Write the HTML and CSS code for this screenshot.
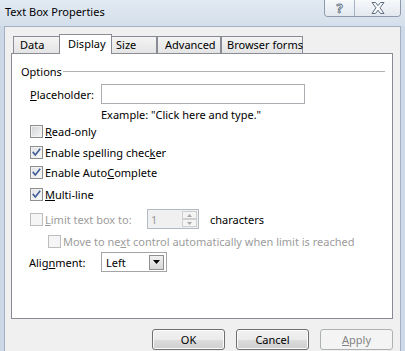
FILE: index.html
```html
<!DOCTYPE html>
<html>
<head>
<meta charset="utf-8">
<title>Text Box Properties</title>
<link rel="stylesheet" href="styles.css">
</head>
<body>
<div class="window">
  <div class="titlebar">
    <span class="title">Text Box Properties</span>
    <div class="caption-btns">
      <span class="cap-btn help">?</span>
      <span class="cap-btn close">
        <svg width="16" height="12" viewBox="0 0 16 12"><polygon points="2,0.5 5.5,0.5 8,3.6 10.5,0.5 14,0.5 10,5.8 14,11.5 10.5,11.5 8,8.2 5.5,11.5 2,11.5 6,5.8" fill="#fbfcfd" stroke="#5d6d80" stroke-width="1"/></svg>
      </span>
    </div>
  </div>
  <div class="client">
    <div class="tabs">
      <div class="tab tab-data">Data</div>
      <div class="tab active tab-display">Display</div>
      <div class="tab tab-size">Size</div>
      <div class="tab tab-adv">Advanced</div>
      <div class="tab tab-bf">Browser forms</div>
    </div>
    <div class="panel">
      <div class="group">
        <span>Options</span>
        <span class="rule"></span>
      </div>
      <div class="field-row">
        <span class="field-label"><u>P</u>laceholder:</span>
        <div class="textbox"></div>
      </div>
      <div class="example">Example: "Click here and type."</div>
      <div class="check-row r-readonly">
        <span class="check"></span>
        <span><u>R</u>ead-only</span>
      </div>
      <div class="check-row r-spell">
        <span class="check checked"><svg width="11" height="11" viewBox="0 0 11 11"><path d="M2.3 5.5 L4.3 7.9 L8.7 2.4" fill="none" stroke="#405c96" stroke-width="1.6" stroke-linecap="square"/></svg></span>
        <span>Enable spelling chec<u>k</u>er</span>
      </div>
      <div class="check-row r-auto">
        <span class="check checked"><svg width="11" height="11" viewBox="0 0 11 11"><path d="M2.3 5.5 L4.3 7.9 L8.7 2.4" fill="none" stroke="#405c96" stroke-width="1.6" stroke-linecap="square"/></svg></span>
        <span>Enable Auto<u>C</u>omplete</span>
      </div>
      <div class="check-row r-multi">
        <span class="check checked"><svg width="11" height="11" viewBox="0 0 11 11"><path d="M2.3 5.5 L4.3 7.9 L8.7 2.4" fill="none" stroke="#405c96" stroke-width="1.6" stroke-linecap="square"/></svg></span>
        <span><u>M</u>ulti-line</span>
      </div>
      <div class="limit-row">
        <span class="check disabled"></span>
        <span class="limit-label disabled-text"><u>L</u>imit text box to:</span>
        <div class="spin">
          <span class="spin-value">1</span>
          <div class="spin-btns">
            <span class="spin-btn"><svg width="5" height="3" viewBox="0 0 5 3"><path d="M0 3 L2.5 0 L5 3Z" fill="#a8a8a8"/></svg></span>
            <span class="spin-btn"><svg width="5" height="3" viewBox="0 0 5 3"><path d="M0 0 L2.5 3 L5 0Z" fill="#a8a8a8"/></svg></span>
          </div>
        </div>
        <span class="chars">characters</span>
      </div>
      <div class="check-row r-move">
        <span class="check disabled"></span>
        <span class="disabled-text">Move to ne<u>x</u>t control automatically when limit is reached</span>
      </div>
      <div class="align-row">
        <span class="align-label">Alig<u>n</u>ment:</span>
        <div class="dropdown">
          <span class="dd-value">Left</span>
          <span class="dd-btn"><svg width="7" height="4" viewBox="0 0 7 4"><path d="M0 0 L7 0 L3.5 4Z" fill="#000"/></svg></span>
        </div>
      </div>
    </div>
    <div class="buttons">
      <button class="btn">OK</button>
      <button class="btn">Cancel</button>
      <button class="btn btn-disabled"><u>A</u>pply</button>
    </div>
  </div>
</div>
</body>
</html>
```

FILE: styles.css
```css
html, body {
  margin: 0;
  padding: 0;
}

body {
  width: 405px;
  height: 351px;
  overflow: hidden;
  background: #cdd9e6;
  font-family: "Noto Sans", "Open Sans", sans-serif;
  font-size: 11px;
  color: #000;
}

u {
  text-decoration: underline;
  text-underline-offset: 1px;
}

.window {
  display: flex;
  flex-direction: column;
  height: 351px;
}

/* Title bar */
.titlebar {
  height: 26px;
  flex: none;
  display: flex;
  align-items: flex-start;
  padding-left: 5px;
  background: linear-gradient(#e2eaf2, #d4dfeb);
}

.title {
  margin-top: 4px;
  line-height: 15px;
}

.caption-btns {
  margin-left: auto;
  margin-right: 4px;
  display: flex;
  height: 16px;
  border: 1px solid #8c9aab;
  border-top: none;
  border-radius: 0 0 4px 4px;
  overflow: hidden;
}

.cap-btn {
  display: flex;
  align-items: center;
  justify-content: center;
  background: linear-gradient(#f7f9fb, #e2e8ef);
}

.cap-btn.help {
  width: 29px;
  font-size: 13px;
  font-weight: bold;
  line-height: 16px;
  color: #fbfcfd;
  -webkit-text-stroke: 0.8px #5d6d80;
}

.cap-btn.close {
  width: 45px;
  border-left: 1px solid #a6b3c2;
}

/* Client area */
.client {
  flex: 1;
  margin: 0 4px;
  border: 1px solid #a2b2c4;
  border-bottom: none;
  background: #f0f0f0;
  padding: 7px 7px 0 6px;
  display: flex;
  flex-direction: column;
}

/* Tabs */
.tabs {
  display: flex;
  align-items: flex-end;
  height: 19px;
  padding-left: 2px;
  position: relative;
  z-index: 1;
}

.tab {
  box-sizing: border-box;
  flex: none;
  height: 17px;
  border: 1px solid #898c95;
  border-bottom: none;
  background: linear-gradient(#f4f4f4, #e4e4e4);
  line-height: 16px;
  white-space: nowrap;
}

.tab-data { width: 48px; padding-left: 6px; }
.tab-size { width: 46px; padding-left: 4px; }
.tab-adv { width: 64px; padding-left: 7px; }
.tab-bf { width: 82px; padding-left: 5px; }

.tab.active {
  width: 53px;
  height: 20px;
  margin: 0 -1px -1px -2px;
  padding-left: 8px;
  background: #fff;
  line-height: 17px;
  position: relative;
  z-index: 2;
}

/* Panel */
.panel {
  box-sizing: border-box;
  height: 266px;
  border: 1px solid #898c95;
  background: #fff;
  display: flex;
  flex-direction: column;
}

.group {
  display: flex;
  align-items: center;
  height: 14px;
  margin: 10px 7px 0 9px;
}

.group .rule {
  flex: 1;
  height: 1px;
  background: #b2b2b2;
  margin-left: 1px;
}

.field-row {
  display: flex;
  align-items: center;
  height: 20px;
  margin: 6px 0 0 18px;
}

.field-label {
  width: 71px;
}

.textbox {
  box-sizing: border-box;
  width: 204px;
  height: 20px;
  border: 1px solid #abadb3;
  background: #fff;
}

.example {
  height: 14px;
  line-height: 14px;
  margin: 4px 0 0 89px;
}

.check-row {
  display: flex;
  align-items: center;
  height: 13px;
  margin-left: 18px;
  white-space: nowrap;
}

.r-readonly { margin-top: 3px; }
.r-spell { margin-top: 8px; }
.r-auto { margin-top: 7px; }
.r-multi { margin-top: 9px; }
.r-move { margin-top: 6px; margin-left: 36px; }

.check {
  box-sizing: border-box;
  flex: none;
  width: 13px;
  height: 13px;
  margin-right: 2px;
  border: 1px solid #8e8f8f;
  background: linear-gradient(135deg, #cfd2d6, #f8f8f8);
  box-shadow: inset 0 0 0 1px #f2f2f2;
  display: flex;
  align-items: center;
  justify-content: center;
}

.check.checked {
  background: linear-gradient(135deg, #dfe1e4, #fbfbfb);
}

.check.disabled {
  border-color: #bdbdbd;
  background: #f5f5f5;
  box-shadow: none;
}

.disabled-text {
  color: #9c9c9c;
}

/* Limit row */
.limit-row {
  display: flex;
  align-items: center;
  height: 20px;
  margin: 8px 0 0 18px;
  white-space: nowrap;
}

.limit-label {
  width: 102px;
}

.spin {
  box-sizing: border-box;
  width: 52px;
  height: 20px;
  border: 1px solid #b3bac4;
  background: #f0f0f0;
  display: flex;
  align-items: center;
  padding-left: 3px;
}

.spin-value {
  flex: 1;
  color: #9c9c9c;
}

.spin-btns {
  display: flex;
  flex-direction: column;
  margin-right: 1px;
}

.spin-btn {
  box-sizing: border-box;
  width: 15px;
  height: 8px;
  border: 1px solid #cfcfcf;
  background: #f4f4f4;
  display: flex;
  align-items: center;
  justify-content: center;
}

.chars {
  margin-left: 11px;
}

/* Alignment row */
.align-row {
  display: flex;
  align-items: center;
  height: 20px;
  margin: 4px 0 0 17px;
}

.align-label {
  width: 72px;
}

.dropdown {
  box-sizing: border-box;
  width: 66px;
  height: 20px;
  border: 1px solid #a5a5a5;
  background: #fff;
  display: flex;
  align-items: center;
  padding-left: 4px;
}

.dd-value {
  flex: 1;
}

.dd-btn {
  box-sizing: border-box;
  width: 15px;
  height: 15px;
  margin-right: 2px;
  border: 1px solid #8f8f8f;
  background: linear-gradient(#f0f0f0, #d6d6d6);
  display: flex;
  align-items: center;
  justify-content: center;
}

/* Buttons */
.buttons {
  display: flex;
  justify-content: flex-end;
  gap: 11px;
  margin-top: 10px;
}

.btn {
  box-sizing: border-box;
  width: 73px;
  height: 21px;
  padding: 0;
  border: 1px solid #707070;
  border-radius: 3px;
  background: linear-gradient(#f2f2f2 0%, #ebebeb 50%, #dddddd 51%, #cfcfcf 100%);
  box-shadow: inset 0 0 0 1px #fbfbfb;
  font-family: "Noto Sans", "Open Sans", sans-serif;
  font-size: 11px;
  color: #000;
  line-height: 17px;
}

.btn-disabled {
  border-color: #adb2b5;
  background: #f4f4f4;
  box-shadow: none;
  color: #838383;
}
```
